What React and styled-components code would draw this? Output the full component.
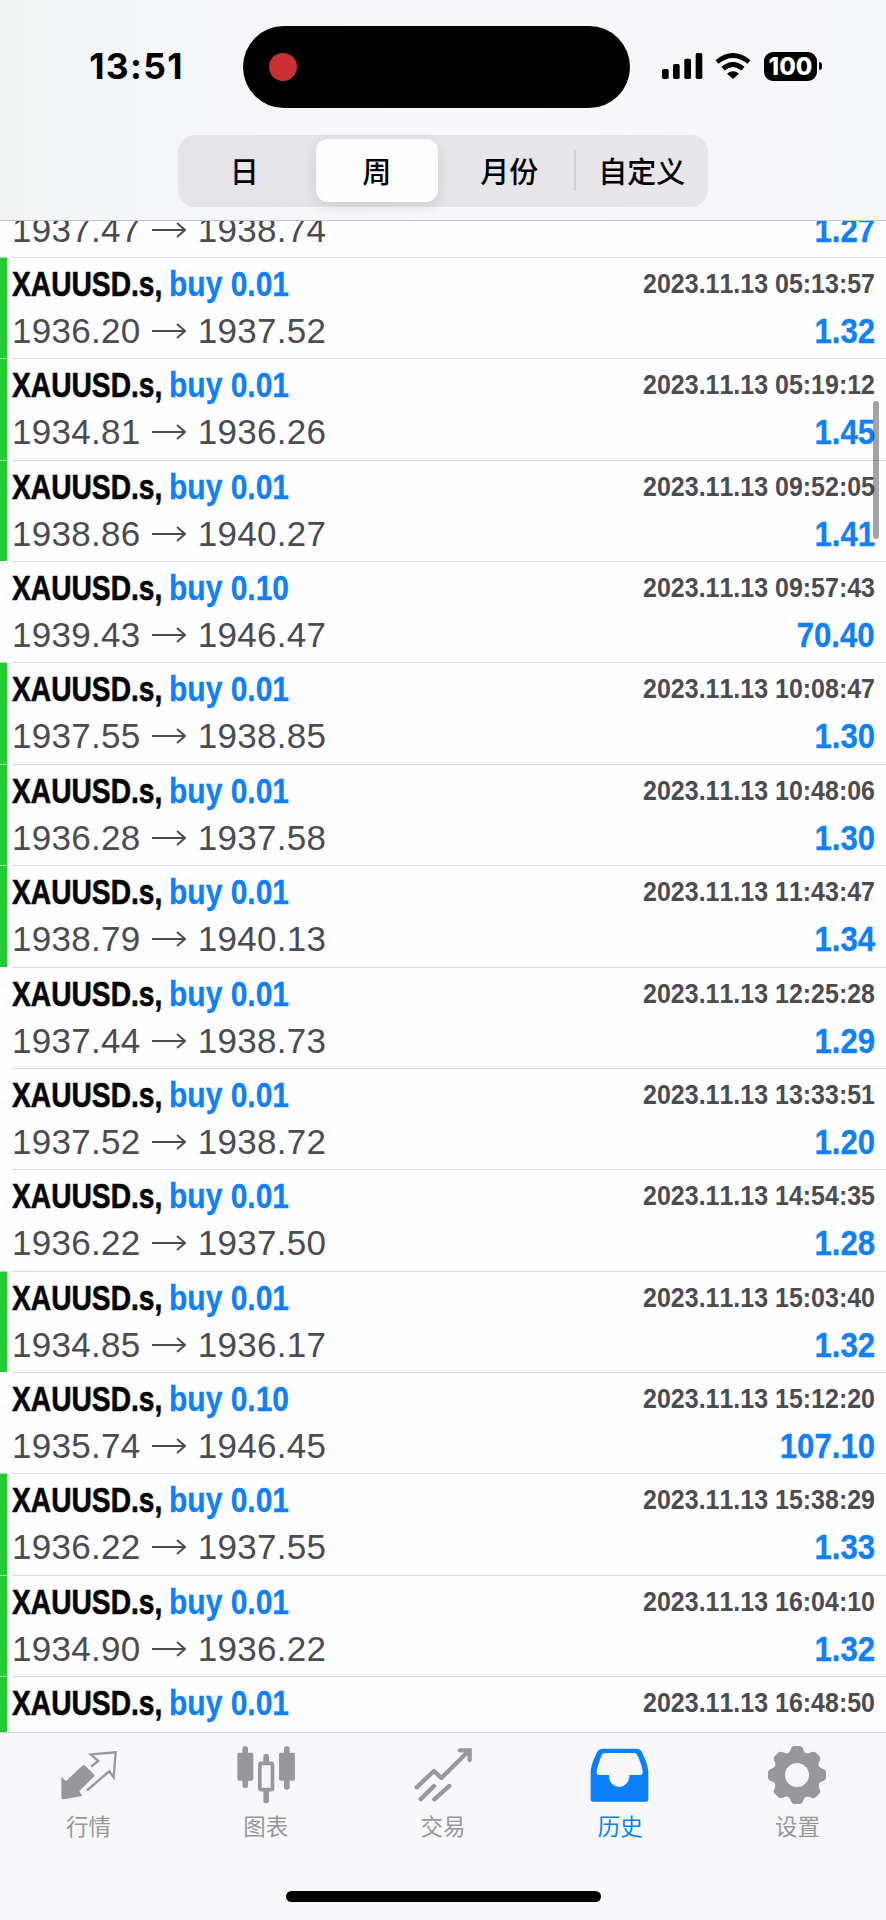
import React from 'react'
import styled, { createGlobalStyle } from 'styled-components'

const blue = '#0f80f7'

const GlobalStyle = createGlobalStyle`
  * { box-sizing: border-box; }
  body {
    margin: 0;
    background: #fefdff;
    font-family: "Liberation Sans", "Noto Sans CJK SC", sans-serif;
  }
`

const Screen = styled.div`
  display: flex;
  flex-direction: column;
  width: 886px;
  height: 1920px;
  overflow: hidden;
`

const Header = styled.header`
  flex: none;
  height: 221px;
  border-bottom: 1px solid #c3c2c5;
  background: linear-gradient(90deg, #f2f3f3 0, #f5f6fa 190px, #f8f7fb 420px, #f7f6f9 720px, #f5f7fc 886px);
`

const StatusBar = styled.div`
  display: grid;
  grid-template-columns: 243px 387px 1fr;
  align-items: center;
  height: 134.5px;
`

const Clock = styled.div`
  padding-left: 30px;
  text-align: center;
  font: 700 35.5px/40px Inter, sans-serif;
  letter-spacing: 1.3px;
  color: #000;
`

const Island = styled.div`
  display: flex;
  align-items: center;
  height: 82px;
  padding-left: 26px;
  border-radius: 41px;
  background: #000;
`

const RecordDot = styled.span`
  width: 28px;
  height: 28px;
  border-radius: 50%;
  background: #c93133;
`

const StatusIcons = styled.div`
  display: flex;
  align-items: center;
  padding: 0 0 2px 32px;
`

const Battery = styled.div`
  width: 53px;
  height: 29px;
  margin-left: 12px;
  border-radius: 9px;
  background: #000;
  color: #fff;
  text-align: center;
  font: 800 24px/29px Inter, sans-serif;
`

const BatteryTip = styled.span`
  width: 3px;
  height: 8px;
  margin-left: 2px;
  border-radius: 0 3px 3px 0;
  background: #000;
`

const Segments = styled.div`
  display: grid;
  grid-template-columns: repeat(4, 1fr);
  align-items: center;
  width: 530px;
  height: 72px;
  margin: 0 auto;
  border-radius: 17px;
  background: linear-gradient(90deg, #e5e6ea, #e6e5e9 45%, #e8e6e9);
`

const Segment = styled.div`
  height: ${props => props.$active ? '63px' : '41px'};
  margin: 0 5px;
  border-radius: 12px;
  text-align: center;
  font: 500 29px/${props => props.$active ? '63px' : '41px'} "Noto Sans CJK SC", sans-serif;
  color: #000;
  ${props => props.$active && 'background: #fefdff; box-shadow: 0 4px 14px rgba(0, 0, 0, 0.12);'}
  ${props => props.$divider && 'margin: 0 0 0 -2px; border-left: 2px solid #cfced2; border-radius: 0;'}
`

const History = styled.main`
  position: relative;
  flex: none;
  height: 1511px;
  overflow: hidden;
`

const Deals = styled.div`
  margin-top: -65.4px;
`

const Deal = styled.div`
  display: grid;
  grid-template-columns: 7px 1fr;
  column-gap: 5px;
  height: 101.375px;
`

const Marker = styled.span`
  border-top: 1px solid ${props => props.$on ? '#a5e3a9' : 'transparent'};
  background: ${props => props.$on ? '#22cc33' : 'transparent'};
`

const DealBody = styled.div`
  border-top: 1px solid #d9d8dc;
  padding-right: 11px;
`

const DealLine = styled.div`
  display: flex;
  height: ${props => props.$h}px;
  line-height: ${props => props.$h}px;
  white-space: nowrap;
  font-kerning: none;
`

/* bold grotesque squeezed to condensed proportions */
const Narrow = styled.span`
  font-weight: 700;
  font-size: ${props => props.$size || 35}px;
  color: ${props => props.$color};
  -webkit-text-stroke: ${props => props.$stroke || 0}px ${props => props.$color};
  transform: scaleX(${props => props.$ratio});
  transform-origin: ${props => props.$right ? 'right' : 'left'} center;
  ${props => props.$right && 'margin-left: auto;'}
`

const SymbolCell = styled.div`
  width: 157px;
`

const SymbolName = styled(Narrow)`
  display: inline-block;
`

const Price = styled.span`
  font-size: 35px;
  letter-spacing: 0.3px;
  color: #4b4b50;
`

const Arrow = styled.svg`
  width: 34px;
  height: 16px;
  margin: 14px 12px 0 11px;
`

const Scrollbar = styled.span`
  position: absolute;
  top: 180px;
  right: 7px;
  width: 6px;
  height: 138px;
  border-radius: 3px;
  background: rgba(40, 38, 42, 0.42);
`

const TabBar = styled.nav`
  display: grid;
  grid-template-columns: repeat(5, 1fr);
  flex: none;
  height: 159px;
  padding-top: 10px;
  border-top: 1px solid #d0cfd2;
  background: #f8f7fa;
`

const Tab = styled.div`
  display: flex;
  flex-direction: column;
  align-items: center;
  color: ${props => props.$active ? '#0a7efb' : '#98979a'};
  font: 400 22.5px/30px "Noto Sans CJK SC", sans-serif;

  svg {
    width: 60px;
    height: 63.3px;
    margin-bottom: 4px;
  }
`

const HomeArea = styled.div`
  flex: 1;
  background: #f8f7fa;
`

const HomeIndicator = styled.div`
  width: 315px;
  height: 11px;
  margin: 0 auto;
  border-radius: 6px;
  background: #000;
`

const deals = [
  { open: '1937.47', close: '1938.74', profit: '1.27' },
  { open: '1936.20', close: '1937.52', time: '2023.11.13 05:13:57', profit: '1.32', tp: true },
  { open: '1934.81', close: '1936.26', time: '2023.11.13 05:19:12', profit: '1.45', tp: true },
  { open: '1938.86', close: '1940.27', time: '2023.11.13 09:52:05', profit: '1.41', tp: true },
  { open: '1939.43', close: '1946.47', time: '2023.11.13 09:57:43', profit: '70.40', lots: '0.10' },
  { open: '1937.55', close: '1938.85', time: '2023.11.13 10:08:47', profit: '1.30', tp: true },
  { open: '1936.28', close: '1937.58', time: '2023.11.13 10:48:06', profit: '1.30', tp: true },
  { open: '1938.79', close: '1940.13', time: '2023.11.13 11:43:47', profit: '1.34', tp: true },
  { open: '1937.44', close: '1938.73', time: '2023.11.13 12:25:28', profit: '1.29' },
  { open: '1937.52', close: '1938.72', time: '2023.11.13 13:33:51', profit: '1.20' },
  { open: '1936.22', close: '1937.50', time: '2023.11.13 14:54:35', profit: '1.28' },
  { open: '1934.85', close: '1936.17', time: '2023.11.13 15:03:40', profit: '1.32', tp: true },
  { open: '1935.74', close: '1946.45', time: '2023.11.13 15:12:20', profit: '107.10', lots: '0.10' },
  { open: '1936.22', close: '1937.55', time: '2023.11.13 15:38:29', profit: '1.33', tp: true },
  { open: '1934.90', close: '1936.22', time: '2023.11.13 16:04:10', profit: '1.32', tp: true },
  { time: '2023.11.13 16:48:50', tp: true }
]

const DealRow = ({ deal }) => (
  <Deal>
    <Marker $on={deal.tp} />
    <DealBody>
      <DealLine $h={51}>
        {deal.time && (
          <>
            <SymbolCell>
              <SymbolName $color='#060508' $ratio={0.805} $stroke={0.6}>XAUUSD.s,</SymbolName>
            </SymbolCell>
            <Narrow $color={blue} $ratio={0.857} $stroke={0.3}>buy {deal.lots || '0.01'}</Narrow>
            <Narrow $color='#4b4b50' $ratio={0.892} $size={28} $right>{deal.time}</Narrow>
          </>
        )}
      </DealLine>
      {deal.open && (
        <DealLine $h={43}>
          <Price>{deal.open}</Price>
          <Arrow viewBox='0 0 34 16' fill='none' stroke='#4b4b50' strokeWidth='1.9'>
            <path d='M0 8H33M25 1L33 8L25 15' />
          </Arrow>
          <Price>{deal.close}</Price>
          <Narrow $color={blue} $ratio={0.89} $stroke={0.3} $right>{deal.profit}</Narrow>
        </DealLine>
      )}
    </DealBody>
  </Deal>
)

const Signal = () => (
  <svg width='90' height='30' viewBox='22 33 270 90'>
    <rect x='22' y='87' width='20' height='30' rx='5' />
    <rect x='55' y='72' width='20' height='45' rx='5' />
    <rect x='89' y='56' width='20' height='61' rx='5' />
    <rect x='123' y='39' width='20' height='78' rx='5' />
    <path d='M187 66Q235 27 283 66M205 86Q235 61 265 86' fill='none' stroke='#000' strokeWidth='14' />
    <path d='M235 117L217 101Q235 87 253 101Z' />
  </svg>
)

const QuotesIcon = () => (
  <svg viewBox='176 100 180 190' fill='currentColor'>
    <path d='M183 202L197 214L246 168Q250 164 254 168L281 194Q284 198 281 201L237 244L246 259L190 269Q183 270 183 263Z' />
    <path d='M272 171L294 154L271 134L346 128L340 203L327 185L260 242' fill='none' stroke='currentColor' strokeWidth='7' />
  </svg>
)

const ChartIcon = () => (
  <svg viewBox='707 100 180 190' fill='currentColor'>
    <rect x='726' y='110' width='17' height='125' rx='7' />
    <rect x='711' y='129' width='48' height='84' rx='5' />
    <rect x='851' y='110' width='17' height='130' rx='7' />
    <rect x='836' y='129' width='48' height='84' rx='5' />
    <rect x='789' y='133' width='17' height='30' rx='7' />
    <rect x='789' y='235' width='17' height='46' rx='7' />
    <rect x='778.5' y='161' width='38' height='79' rx='4' fill='none' stroke='currentColor' strokeWidth='11' />
  </svg>
)

const TradeIcon = () => (
  <svg viewBox='39 25 180 190' fill='none' stroke='currentColor' strokeWidth='13' strokeLinecap='round' strokeLinejoin='round'>
    <path d='M50 158L102 109L124 130L206 49M62 194L102 154M103 194L148 154' />
    <path d='M179 47H209V76' strokeLinejoin='miter' />
  </svg>
)

const HistoryIcon = () => (
  <svg viewBox='442 100 180 190' fill='currentColor' fillRule='evenodd'>
    <path d='M444 188C445 165 455 145 463 128Q468 117 480 117H582Q593 117 598 128C606 145 616 165 617 188V268Q617 276 609 276H452Q444 276 444 268ZM487 130H575Q581 130 584 136C592 152 597 170 600 184Q601 196 592 196H560V200A30.5 32 0 0 1 499 200V196H470Q460 196 462 184C465 168 472 150 477 137Q480 130 487 130Z' />
  </svg>
)

const SettingsIcon = () => (
  <svg viewBox='972 100 180 190'>
    <g transform='translate(1062 196)'>
      <circle r='53' fill='none' stroke='currentColor' strokeWidth='34' />
      {[0, 45, 90, 135, 180, 225, 270, 315].map(angle => (
        <path
          key={angle}
          d='M-32 -62Q-22 -66 -19 -76Q-16 -87 -8 -87H8Q16 -87 19 -76Q22 -66 32 -62L0 -50Z'
          fill='currentColor'
          transform={`rotate(${angle})`}
        />
      ))}
    </g>
  </svg>
)

const App = () => (
  <Screen>
    <GlobalStyle />
    <Header>
      <StatusBar>
        <Clock>13:51</Clock>
        <Island><RecordDot /></Island>
        <StatusIcons>
          <Signal />
          <Battery>100</Battery>
          <BatteryTip />
        </StatusIcons>
      </StatusBar>
      <Segments>
        <Segment>日</Segment>
        <Segment $active>周</Segment>
        <Segment>月份</Segment>
        <Segment $divider>自定义</Segment>
      </Segments>
    </Header>
    <History>
      <Deals>
        {deals.map((deal, i) => <DealRow key={i} deal={deal} />)}
      </Deals>
      <Scrollbar />
    </History>
    <TabBar>
      <Tab><QuotesIcon />行情</Tab>
      <Tab><ChartIcon />图表</Tab>
      <Tab><TradeIcon />交易</Tab>
      <Tab $active><HistoryIcon />历史</Tab>
      <Tab><SettingsIcon />设置</Tab>
    </TabBar>
    <HomeArea>
      <HomeIndicator />
    </HomeArea>
  </Screen>
)

export default App
